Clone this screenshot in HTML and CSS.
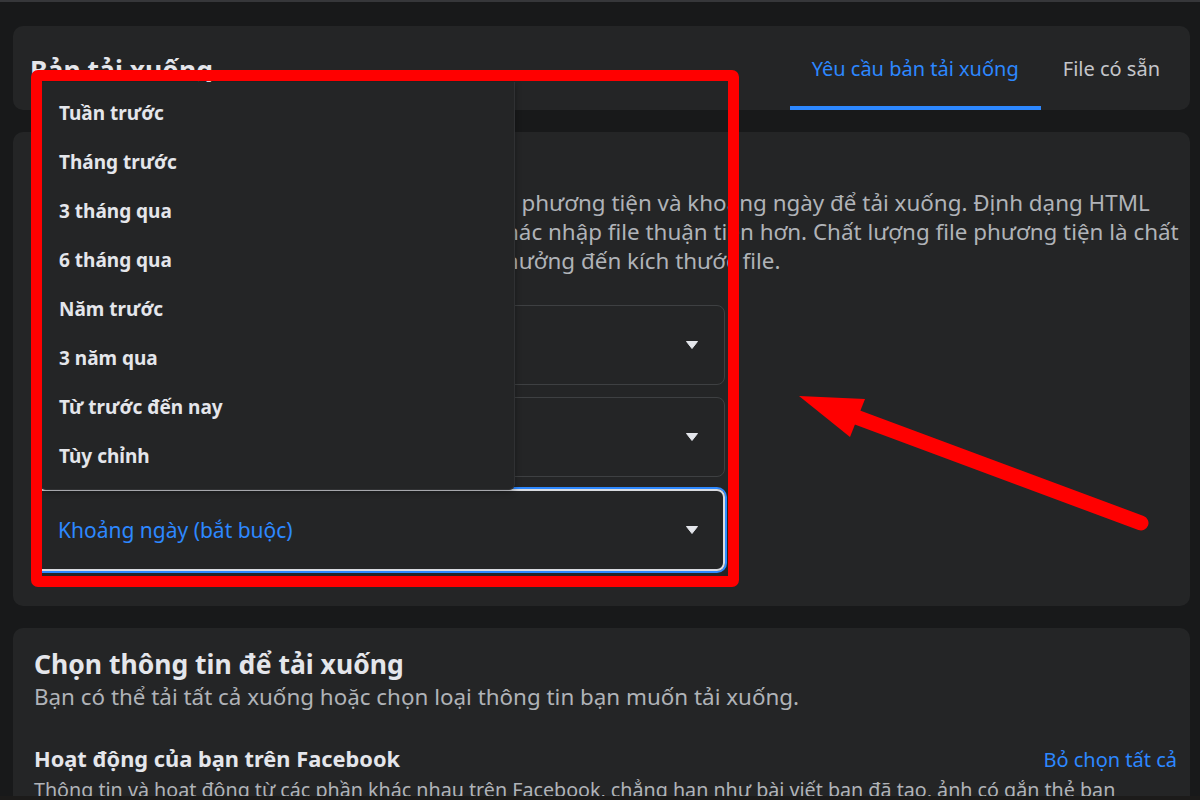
FILE: index.html
```html
<!DOCTYPE html>
<html lang="vi">
<head>
<meta charset="utf-8">
<title>Bản tải xuống</title>
<link rel="stylesheet" href="styles.css">
</head>
<body>
<div class="screen">
  <main class="page">
    <section class="card header-card">
      <h1 class="page-title">Bản tải xuống</h1>
      <nav class="tabs">
        <a class="tab active">Yêu cầu bản tải xuống</a>
        <a class="tab">File có sẵn</a>
      </nav>
    </section>

    <section class="card options-card">
      <h2 class="card-title">Chọn tùy chọn file</h2>
      <p class="desc">Chọn định dạng file tải xuống, chất lượng file phương tiện và khoảng ngày để tải xuống. Định dạng HTML<br>dễ xem hơn còn định dạng JSON để dịch vụ khác nhập file thuận tiện hơn. Chất lượng file phương tiện là chất<br>lượng ảnh video. Chất lượng cao hơn sẽ ảnh hưởng đến kích thước file.</p>
      <div class="selects">
        <div class="select">
          <div class="select-text"><span class="select-hint">Định dạng</span><span class="select-value">HTML</span></div>
          <svg class="caret" viewBox="0 0 12 8" width="12" height="8"><path d="M0.5 0.5h11l-5.5 7z"/></svg>
        </div>
        <div class="select">
          <div class="select-text"><span class="select-hint">Chất lượng file phương tiện</span><span class="select-value">Trung bình</span></div>
          <svg class="caret" viewBox="0 0 12 8" width="12" height="8"><path d="M0.5 0.5h11l-5.5 7z"/></svg>
        </div>
        <div class="select focused">
          <div class="select-text"><span class="select-placeholder">Khoảng ngày (bắt buộc)</span></div>
          <svg class="caret" viewBox="0 0 12 8" width="12" height="8"><path d="M0.5 0.5h11l-5.5 7z"/></svg>
        </div>
      </div>
    </section>

    <section class="card info-card">
      <h2 class="info-title">Chọn thông tin để tải xuống</h2>
      <p class="info-sub">Bạn có thể tải tất cả xuống hoặc chọn loại thông tin bạn muốn tải xuống.</p>
      <div class="info-row">
        <h3 class="info-head">Hoạt động của bạn trên Facebook</h3>
        <a class="link">Bỏ chọn tất cả</a>
      </div>
      <p class="info-note">Thông tin và hoạt động từ các phần khác nhau trên Facebook, chẳng hạn như bài viết bạn đã tạo, ảnh có gắn thẻ bạn</p>
    </section>
  </main>

  <ul class="menu">
    <li class="menu-item">Tuần trước</li>
    <li class="menu-item">Tháng trước</li>
    <li class="menu-item">3 tháng qua</li>
    <li class="menu-item">6 tháng qua</li>
    <li class="menu-item">Năm trước</li>
    <li class="menu-item">3 năm qua</li>
    <li class="menu-item">Từ trước đến nay</li>
    <li class="menu-item">Tùy chỉnh</li>
  </ul>

  <div class="annot-box"></div>
  <svg class="annot-arrow" viewBox="0 0 1200 800" width="1200" height="800">
    <line x1="1141" y1="523" x2="848" y2="414" stroke="#ff0000" stroke-width="15" stroke-linecap="round"/>
    <polygon points="799,396 865,399 850,437" fill="#ff0000"/>
  </svg>
  <div class="bottom-edge"></div>
</div>
</body>
</html>
```

FILE: styles.css
```css
* { box-sizing: border-box; }

html, body {
  margin: 0;
  padding: 0;
  background: #18191a;
}

body {
  font-family: "Noto Sans", "Open Sans", "DejaVu Sans", sans-serif;
  color: #e4e6eb;
  overflow: hidden;
}

.screen {
  position: relative;
  width: 1200px;
  height: 800px;
  overflow: hidden;
  border-top: 2px solid #36373a;
}

.page {
  display: flex;
  flex-direction: column;
  gap: 22px;
  padding: 24px 10px 0 13px;
}

.card {
  background: #242526;
  border-radius: 10px;
}

/* header */
.header-card {
  height: 84px;
  display: flex;
  align-items: stretch;
  justify-content: space-between;
  padding: 0 8px 0 17px;
}

.page-title {
  margin: 0;
  align-self: center;
  font-size: 26.5px;
  font-weight: 700;
  line-height: 32px;
  padding-top: 4px;
  color: #e4e6eb;
}

.tabs {
  display: flex;
  align-items: stretch;
}

.tab {
  display: flex;
  align-items: center;
  padding: 0 22px;
  font-size: 20px;
  color: #c4c6ca;
  border-bottom: 4px solid transparent;
  padding-top: 5px;
}

.tab.active {
  color: #2d88ff;
  border-bottom-color: #2d88ff;
}

/* options */
.options-card {
  height: 474px;
  padding: 20px 21px 0 21px;
}

.card-title {
  margin: 0;
  font-size: 24px;
  line-height: 30px;
  font-weight: 700;
  color: #e4e6eb;
}

.desc {
  margin: 6px 0 0 0;
  font-size: 22.4px;
  line-height: 29px;
  color: #b0b3b8;
  white-space: nowrap;
  text-indent: 8px;
}

.selects {
  margin-top: 30px;
  width: 691px;
  display: flex;
  flex-direction: column;
  gap: 12px;
}

.select {
  height: 80px;
  border: 1px solid #3e4042;
  border-radius: 8px;
  display: flex;
  align-items: center;
  justify-content: space-between;
  padding: 0 26px 0 23px;
}

.select-text {
  display: flex;
  flex-direction: column;
}

.select-hint {
  font-size: 15px;
  color: #b0b3b8;
}

.select-value {
  font-size: 20px;
  color: #e4e6eb;
}

.select-placeholder {
  font-size: 21px;
  color: #2d88ff;
}

.select.focused {
  border: 2px solid #d9dbe0;
  box-shadow: 0 0 0 2px #2d88ff;
  padding-left: 22px;
  padding-right: 25px;
  height: 82px;
}

.caret {
  display: block;
  fill: #e4e6eb;
  stroke: #e4e6eb;
  stroke-width: 1;
  stroke-linejoin: round;
}

/* info card */
.info-card {
  padding: 20px 13px 0 21px;
  height: 200px;
}

.info-title {
  margin: 0;
  font-size: 26.5px;
  line-height: 32px;
  font-weight: 700;
  color: #e4e6eb;
}

.info-sub {
  margin: 2px 0 0 0;
  font-size: 22.4px;
  line-height: 29px;
  color: #b0b3b8;
  white-space: nowrap;
}

.info-row {
  margin-top: 33px;
  display: flex;
  justify-content: space-between;
  align-items: center;
}

.info-head {
  margin: 0;
  font-size: 21.8px;
  line-height: 30px;
  font-weight: 700;
  color: #e4e6eb;
}

.link {
  font-size: 20px;
  color: #2d88ff;
}

.info-note {
  margin: 2px 0 0 0;
  font-size: 19.7px;
  line-height: 28px;
  color: #b0b3b8;
  white-space: nowrap;
}

/* dropdown menu */
.menu {
  position: absolute;
  left: 40px;
  top: 80px;
  width: 475px;
  height: 408px;
  margin: 0;
  padding: 6px 0 0 0;
  list-style: none;
  background: #242526;
  border: 1px solid #303133;
  border-top: none;
  border-radius: 0 0 6px 6px;
  box-shadow: 0 2px 6px rgba(0, 0, 0, 0.35);
}

.menu-item {
  height: 49px;
  display: flex;
  align-items: center;
  padding-left: 18px;
  font-size: 19px;
  font-weight: 700;
  color: #e4e6eb;
}

/* annotations */
.annot-box {
  position: absolute;
  left: 31px;
  top: 68px;
  width: 708px;
  height: 517px;
  border: 11px solid #ff0000;
  border-radius: 7px;
}

.annot-arrow {
  position: absolute;
  left: 0;
  top: -2px;
}

.bottom-edge {
  position: absolute;
  left: 0;
  right: 0;
  bottom: 0;
  height: 4px;
  background: #1c1b1a;
}
```
